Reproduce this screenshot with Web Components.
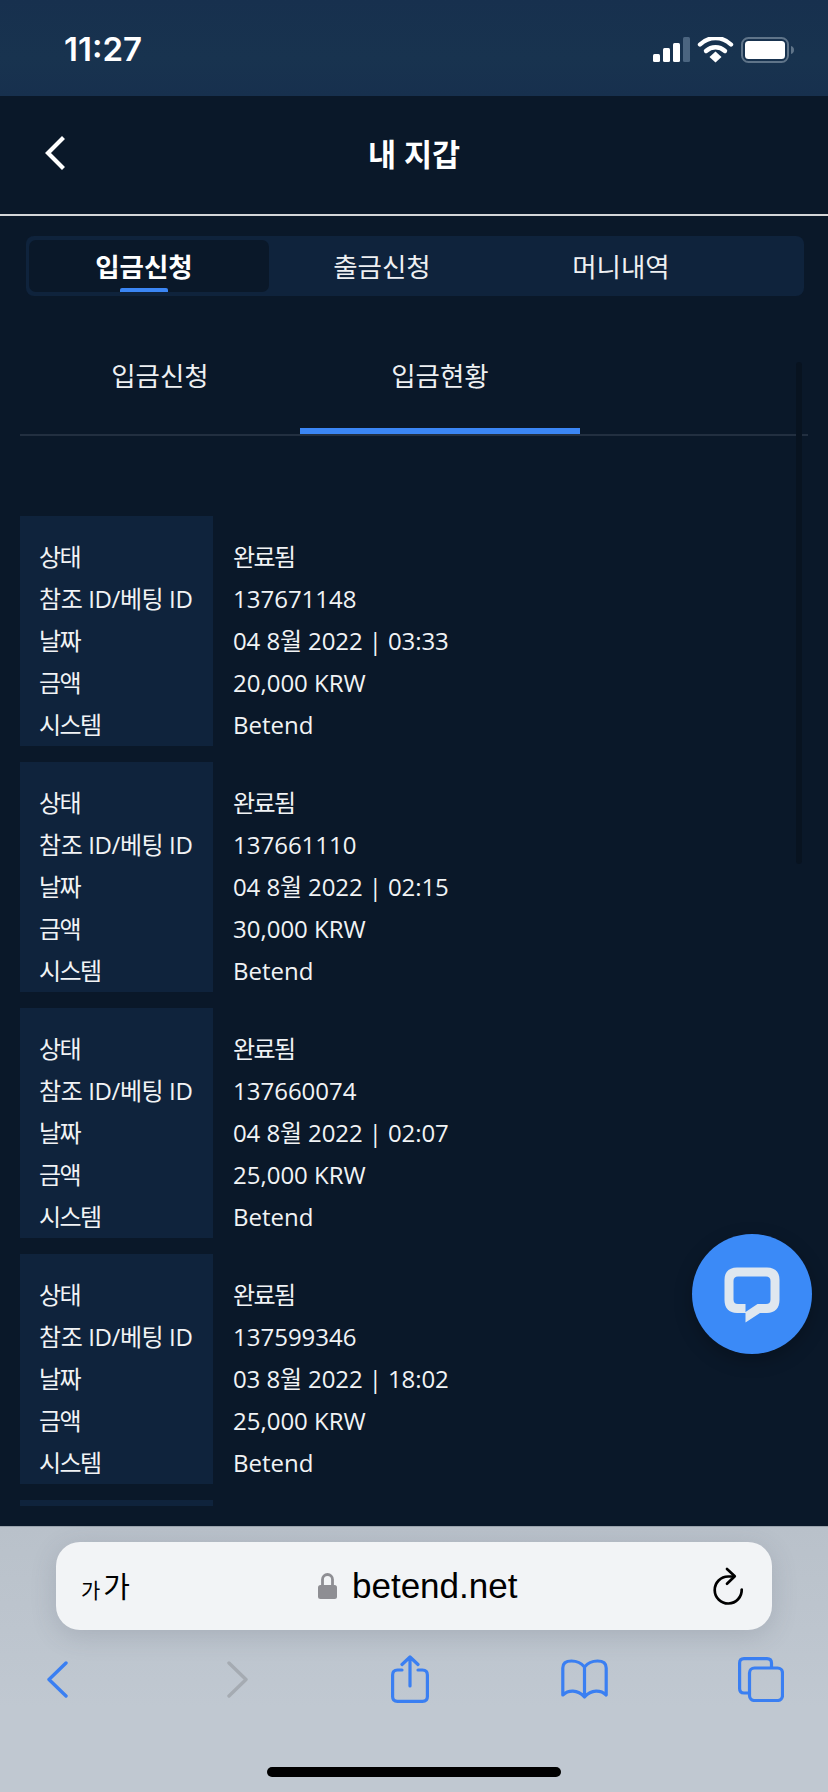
<!DOCTYPE html>
<html lang="ko">
<head>
<meta charset="utf-8">
<title>내 지갑</title>
<style>
    html, body { margin: 0; background: #0a1829; }
    body {
        width: 828px;
        height: 1792px;
        overflow: hidden;
        font-family: "Open Sans", "Noto Sans CJK KR", sans-serif;
        color: #fff;
    }
</style>
</head>
<body>
<wallet-page>
    <status-bar time="11:27"></status-bar>
    <wallet-header>내 지갑</wallet-header>
    <wallet-tabs>
        <wallet-tab active>입금신청</wallet-tab>
        <wallet-tab style="width:226px">출금신청</wallet-tab>
        <wallet-tab style="width:252px">머니내역</wallet-tab>
    </wallet-tabs>
    <sub-tabs>
        <sub-tab>입금신청</sub-tab>
        <sub-tab active>입금현황</sub-tab>
    </sub-tabs>
    <tx-list>
        <tx-card><span slot="status">완료됨</span><span slot="ref">137671148</span><span slot="date">04 8월 2022 | 03:33</span><span slot="amount">20,000 KRW</span><span slot="system">Betend</span></tx-card>
        <tx-card><span slot="status">완료됨</span><span slot="ref">137661110</span><span slot="date">04 8월 2022 | 02:15</span><span slot="amount">30,000 KRW</span><span slot="system">Betend</span></tx-card>
        <tx-card><span slot="status">완료됨</span><span slot="ref">137660074</span><span slot="date">04 8월 2022 | 02:07</span><span slot="amount">25,000 KRW</span><span slot="system">Betend</span></tx-card>
        <tx-card><span slot="status">완료됨</span><span slot="ref">137599346</span><span slot="date">03 8월 2022 | 18:02</span><span slot="amount">25,000 KRW</span><span slot="system">Betend</span></tx-card>
        <tx-card peek></tx-card>
    </tx-list>
    <chat-button></chat-button>
    <safari-bar url="betend.net"></safari-bar>
</wallet-page>
<script>
(function () {
    const FONT = `"Open Sans", "Noto Sans CJK KR", sans-serif`;

    function define(name, html) {
        customElements.define(name, class extends HTMLElement {
            constructor() {
                super();
                this.attachShadow({ mode: 'open' });
                this.shadowRoot.innerHTML = html(this);
            }
        });
    }

    define('wallet-page', () => /*html*/`
        <style>
            :host { display: flex; flex-direction: column; position: relative; width: 828px; height: 1792px; overflow: hidden; }
            .scroll { position: absolute; left: 796px; top: 362px; width: 6px; height: 502px; border-radius: 3px; background: #081320; }
        </style>
        <slot></slot>
        <div class="scroll"></div>
    `);

    define('status-bar', (el) => /*html*/`
        <style>
            :host { display: flex; align-items: center; justify-content: space-between; box-sizing: border-box; height: 96px; padding: 3px 34px 0 64px; background: linear-gradient(#17304e, #18334f 60%, #17304e); }
            .time { font: 600 33px/1 Inter, sans-serif; letter-spacing: 0; }
            svg { display: block; }
        </style>
        <span class="time">${el.getAttribute('time')}</span>
        <svg width="141" height="26" viewBox="0 0 141 26" fill="#fff">
            <rect x="0" y="17" width="7" height="8" rx="1.5"/>
            <rect x="10" y="11" width="7" height="14" rx="1.5"/>
            <rect x="20" y="6" width="7" height="19" rx="1.5"/>
            <rect x="30" y="0" width="7" height="25" rx="1.5" fill="#4b6580"/>
            <path d="M47 7.500C56 -1 69 -1 78 7.500" fill="none" stroke="#fff" stroke-width="4.400" stroke-linecap="round"/>
            <path d="M53 14C58.500 9 66.500 9 72 14" fill="none" stroke="#fff" stroke-width="4.400" stroke-linecap="round"/>
            <path d="M56.500 20L62.500 14.500L68.500 20L62.500 25.500Z"/>
            <rect x="89" y="1" width="46" height="24" rx="6.500" fill="none" stroke="#5f7489" stroke-width="2"/>
            <rect x="92" y="4" width="40" height="18" rx="3.500"/>
            <path d="M138 9C140 9.500 141 11 141 13C141 15 140 16.500 138 17Z" fill="#5f7489"/>
        </svg>
    `);

    define('wallet-header', () => /*html*/`
        <style>
            :host { display: flex; align-items: center; justify-content: center; position: relative; box-sizing: border-box; height: 120px; padding-bottom: 4px; border-bottom: 2px solid #d4d6d8; font-weight: 700; font-size: 30.500px; background: #0a1829; }
            svg { position: absolute; left: 43px; top: 39px; }
        </style>
        <svg width="24" height="36" viewBox="0 0 24 36" fill="none" stroke="#fff" stroke-width="4.200" stroke-linecap="square"><path d="M19 4L5 18L19 32"/></svg>
        <slot></slot>
    `);

    define('wallet-tabs', () => /*html*/`
        <style>
            :host { display: flex; box-sizing: border-box; width: 778px; height: 60px; margin: 20px 0 0 26px; padding: 4px 3px; border-radius: 8px; background: #0f233c; }
        </style>
        <slot></slot>
    `);

    define('wallet-tab', () => /*html*/`
        <style>
            :host { display: flex; align-items: center; justify-content: center; position: relative; box-sizing: border-box; width: 240px; height: 52px; padding-bottom: 2px; border-radius: 7px; font-size: 26.500px; color: #eef0f2; }
            :host([active]) { background: #0a1829; font-weight: 700; color: #fff; padding-right: 10px; }
            :host([active])::after { content: ""; position: absolute; left: 91px; bottom: 0; width: 48px; height: 4px; border-radius: 2px 2px 0 0; background: #3b86f5; }
        </style>
        <slot></slot>
    `);

    define('sub-tabs', () => /*html*/`
        <style>
            :host { display: flex; box-sizing: border-box; width: 788px; height: 140px; margin-left: 20px; border-bottom: 2px solid #222f40; }
        </style>
        <slot></slot>
    `);

    define('sub-tab', () => /*html*/`
        <style>
            :host { display: flex; align-items: center; justify-content: center; box-sizing: border-box; width: 280px; height: 138px; padding: 20px 0 0; font-size: 26.500px; color: #eef0f2; }
            :host([active]) { border-bottom: 6px solid #3b86f5; padding-top: 26px; }
            span { position: relative; top: -1px; }
        </style>
        <span><slot></slot></span>
    `);

    // list is clipped where the browser toolbar area starts
    define('tx-list', () => /*html*/`
        <style>
            :host { display: flex; flex-direction: column; gap: 16px; box-sizing: border-box; height: 1070px; padding: 80px 0 0 20px; overflow: hidden; }
            ::slotted(tx-card) { flex: none; }
        </style>
        <slot></slot>
    `);

    define('tx-card', (el) => {
        const rows = [['상태', 'status'], ['참조 ID/베팅 ID', 'ref', 'wide'], ['날짜', 'date'], ['금액', 'amount'], ['시스템', 'system']];
        // the last card only peeks out under the list edge, its rows are out of view
        const shown = el.hasAttribute('peek') ? [] : rows;
        return /*html*/`
            <style>
                :host { display: grid; grid-template-columns: 193px 1fr; box-sizing: border-box; height: 230px; font-size: 24px; color: #f1f3f5; }
                .col { display: flex; flex-direction: column; box-sizing: border-box; padding-top: 20px; }
                .labels { background: #0f233c; padding-left: 19px; }
                .values { padding-left: 20px; }
                .col > div { height: 42px; line-height: 42px; white-space: nowrap; }
                .labels > div { letter-spacing: -1.600px; }
                .labels > div.wide { letter-spacing: -.400px; }
                ::slotted([slot="status"]) { letter-spacing: -1.600px; }
                ::slotted([slot="date"]) { letter-spacing: -.100px; }
            </style>
            <div class="col labels">${shown.map(r => `<div class="${r[2] || ''}">${r[0]}</div>`).join('')}</div>
            <div class="col values">${shown.map(r => `<div><slot name="${r[1]}"></slot></div>`).join('')}</div>
        `;
    });

    define('chat-button', () => /*html*/`
        <style>
            :host { display: flex; align-items: center; justify-content: center; position: absolute; left: 692px; top: 1234px; width: 120px; height: 120px; border-radius: 50%; background: #3b8af7; box-shadow: 0 6px 18px rgba(0,0,0,.25); }
            svg { position: relative; top: 1px; }
        </style>
        <svg width="56" height="56" viewBox="0 0 56 56">
            <path fill="#dfe7ef" fill-rule="evenodd" d="M13 0.500H43C51 0.500 55.500 5 55.500 13V33C55.500 41 51 46 43 46H36L21.500 55.500V46H13C5 46 0.500 41 0.500 33V13C0.500 5 5 0.500 13 0.500ZM14 9.500C11 9.500 9.500 11 9.500 14V32.500C9.500 35.500 11 37 14 37H21.500V45L33.500 37H42C45 37 46.500 35.500 46.500 32.500V14C46.500 11 45 9.500 42 9.500Z"/>
        </svg>
    `);

    define('safari-bar', (el) => /*html*/`
        <style>
            :host { display: flex; flex-direction: column; box-sizing: border-box; flex: 1; margin-top: 20px; padding-top: 15px; border-top: 1px solid #9aa3ad; background: linear-gradient(#b9c1ca, #c0c8d1 180px); color: #000; }
            .address { display: flex; align-items: center; position: relative; box-sizing: border-box; width: 716px; height: 88px; margin-left: 56px; padding: 0 27px 0 25px; border-radius: 24px; background: #f2f4f6; box-shadow: 0 6px 26px rgba(70,80,95,.18); }
            .size { display: flex; align-items: baseline; gap: 3px; font-family: ${FONT}; line-height: 1; }
            .size b { font-weight: 400; font-size: 21px; }
            .size i { font-style: normal; font-size: 29px; }
            .site { display: flex; align-items: center; gap: 15px; position: absolute; left: 262px; top: 0; height: 88px; }
            .url { font: 400 35px/1 "Liberation Sans", sans-serif; position: relative; top: -1px; }
            .reload { margin-left: auto; }
            .tools { display: grid; grid-template-columns: 180px 164px 170px 177px auto; align-items: center; height: 48px; margin-top: 25px; padding-left: 47px; }
            .home { width: 294px; height: 10px; margin: 64px 0 0 267px; border-radius: 5px; background: #000; }
            svg { display: block; }
        </style>
        <div class="address">
            <span class="size"><b>가</b><i>가</i></span>
            <div class="site">
                <svg width="19" height="26" viewBox="0 0 19 26"><path d="M4.500 13V6.500a5 5 0 0 1 10 0V13" fill="none" stroke="#8e8e93" stroke-width="2.800"/><rect y="12" width="19" height="14" rx="2.500" fill="#8e8e93"/></svg>
                <span class="url">${el.getAttribute('url')}</span>
            </div>
            <svg class="reload" width="32" height="38" viewBox="0 0 32 38" fill="none" stroke="#000" stroke-width="2.700" stroke-linecap="round" stroke-linejoin="round">
                <path d="M20.500 9.500H15.200A13.500 13.500 0 1 0 28.700 22.500"/>
                <path d="M14 2L21.800 9.200L14 16.700"/>
            </svg>
        </div>
        <div class="tools">
            <svg width="21" height="37" viewBox="0 0 21 37" fill="none" stroke="#3a7ff2" stroke-width="3.400" stroke-linecap="round" stroke-linejoin="round"><path d="M19 2L2 18.500L19 35"/></svg>
            <svg width="21" height="37" viewBox="0 0 21 37" fill="none" stroke="#a5abb2" stroke-width="3.400" stroke-linecap="round" stroke-linejoin="round"><path d="M2 2L19 18.500L2 35"/></svg>
            <svg width="38" height="48" viewBox="0 0 38 48" fill="none" stroke="#3a7ff2" stroke-width="3.200" stroke-linecap="round" stroke-linejoin="round"><path d="M27 15H31.500C34.800 15 36.400 16.600 36.400 20V41.500C36.400 44.800 34.800 46.400 31.500 46.400H6.500C3.200 46.400 1.600 44.800 1.600 41.500V20C1.600 16.600 3.200 15 6.500 15H11"/><path d="M19 31V2M11 9.500L19 2L27 9.500"/></svg>
            <svg width="47" height="40" viewBox="0 0 47 40" fill="none" stroke="#3a7ff2" stroke-width="3.200" stroke-linecap="round" stroke-linejoin="round"><path d="M23.500 8C19.500 3 14.500 2 10.500 2C4.500 2 1.800 4.500 1.800 9V36C7 31 16.500 30 23.500 38C30.500 30 40 31 45.200 36V9C45.200 4.500 42.500 2 36.500 2C32.500 2 27.500 3 23.500 8V38"/></svg>
            <svg width="46" height="45" viewBox="0 0 46 45" fill="none" stroke="#3a7ff2" stroke-width="3.200" stroke-linejoin="round"><path d="M11 36H6C3 36 1.600 34.500 1.600 31.500V6C1.600 3 3 1.600 6 1.600H29C32 1.600 33.500 3 33.500 6V11"/><rect x="11.500" y="11" width="33" height="32.500" rx="5"/></svg>
        </div>
        <div class="home"></div>
    `);
})();
</script>
</body>
</html>
